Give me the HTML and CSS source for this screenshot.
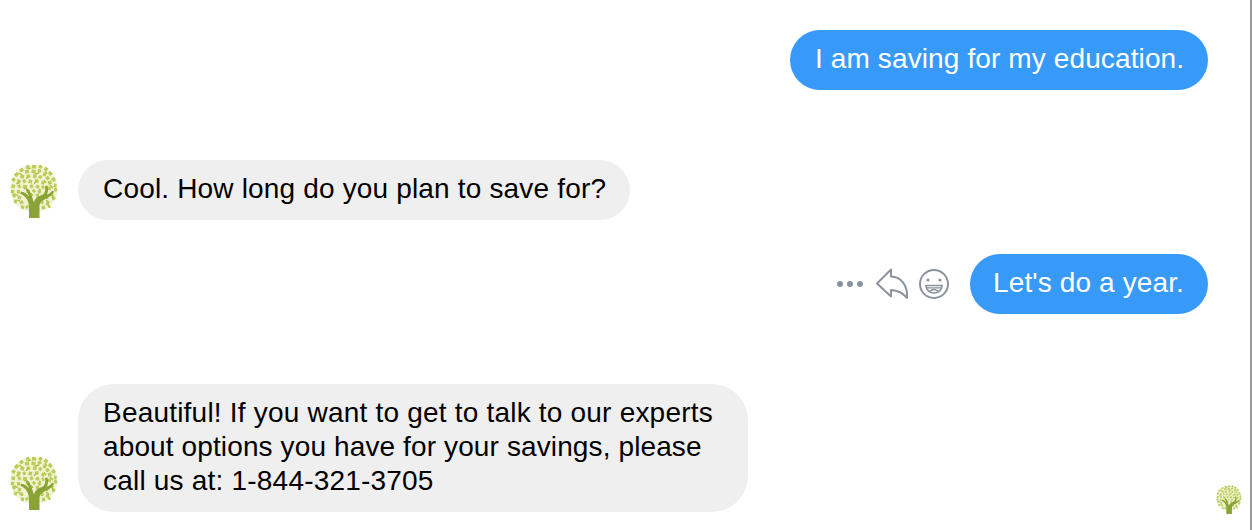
FILE: index.html
```
<!DOCTYPE html>
<html lang="en">
<head>
<meta charset="utf-8">
<title>Conversation</title>
<link rel="stylesheet" href="styles.css">
</head>
<body>
<svg class="defs" aria-hidden="true">
  <symbol id="tree" viewBox="0 0 48 54">
    <path fill="#f0f4d2" d="M24 1C37 1 47.500 11 47.500 24.500C47.500 37 39 45 31 47H17C8 45 .5 36 .5 24.500C.5 11 11 1 24 1Z"/>
    <path fill="none" stroke="#bdcc58" stroke-width="3.500" d="M16 3.500l3.500-1M22 2.500l4 .5M29 2l3 1.500M34.500 4l3 2M10 7l3-2M15 8l4-.8M21.500 7l4 1M28 7.500l3-1.500M33 10l3 .8M39 8l2.500 2.800M5 12l3-3M10.500 12l3.500 1M17 13l3-1.500M23 12l3.500 .5M29 12l2.500 2M36 15l3-1.800M42.500 14l2 3M2.500 17l2-2.800M7 17l3.500 .8M13 18l2.500-1.500M18.500 17l3.500 1M25 17.500l3.500-1M31.500 18l3 1.300M38 19l3.500-1M44 21l2.500 .8M1.500 22l3.500 .5M8 23l2.500-1.500M13 22.500l4 .5M20 23l3-1.500M26 22l3 1.500M32 24l2-1.500M38 24l3 .8M44 26l3-.8M1 27l3 1M7 28l3-.5M16.500 27l3 1M23 28l2-2M28 28l3-.8M40.500 30l3 .3M2.500 32l3-1M8 33l3 1.200M19 32l3 .5M26 32l3-1M35.500 34l2.500-1M42 35l3-1.500M4 37l3 1M10 39l3-1.500M36 39l3 1M31 38l2.500 1M11 43l3 .5M16 42l2 2M32 44l3-1M38 43l2-1.500"/>
    <path fill="none" stroke="#adbc3e" stroke-width="1.300" d="M18 5l3-1M9 9l3 2M25 10l4-1M35 7l2 3M16 15l2-3M6 20l3-1M24 20l2-3M34 16l2 3M40 21l3 3M14 25l3-1M5 30l3 2M21 29l2 3M42 31l1 3M7 36l3 1M36 36l3 2M29 25l2 1"/>
    <path fill="#8aa335" d="M19 54V42.500C18.500 36.500 16 32 10.500 30L10.800 27.500C15 28 17 30 19 32.500C18.200 29.500 17 27.700 15.500 25.500L17.500 24.500C21.500 28.500 22.300 34 24 38.500C25 34.500 27.500 32.500 32 31C35 29.500 35.800 26 35 22L37.500 21.500C38.500 25.500 38 28 37 30.500C39.500 29.800 41 28.500 42 26.800L44 27.500C41.500 35 29.500 34.500 29.500 42.500V54Z"/>
  </symbol>
</svg>
<main class="chat">
  <div class="row sent first"><p class="bubble blue">I am saving for my education.</p></div>
  <div class="row received second">
    <svg class="avatar"><use href="#tree"/></svg>
    <p class="bubble gray cool">Cool. How long do you plan to save for?</p>
  </div>
  <div class="row sent third">
    <svg class="actions" viewBox="0 0 120 40" fill="none" stroke="#8c939e" stroke-width="2">
      <g fill="#8c939e" stroke="none"><circle cx="10" cy="20" r="3"/><circle cx="20" cy="20" r="3"/><circle cx="30" cy="20" r="3"/></g>
      <path stroke-linejoin="round" d="M47 19.500L61 5.500V12.500C71 13 78 21 77 34Q71 26.500 61 26V32.500Z"/>
      <circle cx="104" cy="20" r="14"/>
      <g fill="#8c939e" stroke="none"><circle cx="98" cy="16" r="1.600"/><circle cx="110" cy="16" r="1.600"/></g>
      <path stroke-width="1.700" d="M96 21.500H112C112 31.500 96 31.500 96 21.500Z"/>
      <path stroke-width="1.300" d="M97 23.800H111M99.500 27.500Q104 23.500 108.500 27.500"/>
    </svg>
    <p class="bubble blue year">Let's do a year.</p>
  </div>
  <div class="row received fourth">
    <svg class="avatar"><use href="#tree"/></svg>
    <p class="bubble gray beautiful"><span class="wide">Beautiful! If you want to get to talk to our experts</span><br>about options you have for your savings, please<br><span class="wide">call us at: 1-844-321-3705</span></p>
    <svg class="seen"><use href="#tree"/></svg>
  </div>
</main>
</body>
</html>
```
FILE: styles.css
```
body { margin: 0; background: #fff; }
.defs { position: absolute; width: 0; height: 0; }
.chat {
  box-sizing: border-box;
  height: 530px;
  padding: 30px 0 0 10px;
  border-right: 2px solid #999;
  overflow: hidden;
  font: 28px/34px "Helvetica Neue", "Liberation Sans", Arial, sans-serif;
  letter-spacing: 0.12px;
}
.row { display: flex; align-items: flex-end; }
.sent { justify-content: flex-end; padding-right: 42px; }
.second { margin-top: 70px; }
.third { margin-top: 34px; }
.fourth { margin-top: 70px; }
.bubble {
  box-sizing: border-box;
  width: 418px;
  margin: 0;
  padding: 12px 0 14px 25px;
  border-radius: 30px;
  white-space: nowrap;
}
.blue { background: #389af8; color: #fff; }
.gray { background: #efefef; color: #000; }
.cool { width: 552px; letter-spacing: 0.17px; }
.year { width: 238px; padding-left: 23px; }
.beautiful { width: 670px; border-radius: 36px; }
.wide { letter-spacing: 0.205px; }
.avatar { width: 48px; height: 54px; margin: 0 20px 2px 0; }
.actions { width: 120px; height: 40px; margin: 0 20px 10px 0; }
.seen { width: 26px; height: 29px; margin: 0 8px -2px auto; }
```
